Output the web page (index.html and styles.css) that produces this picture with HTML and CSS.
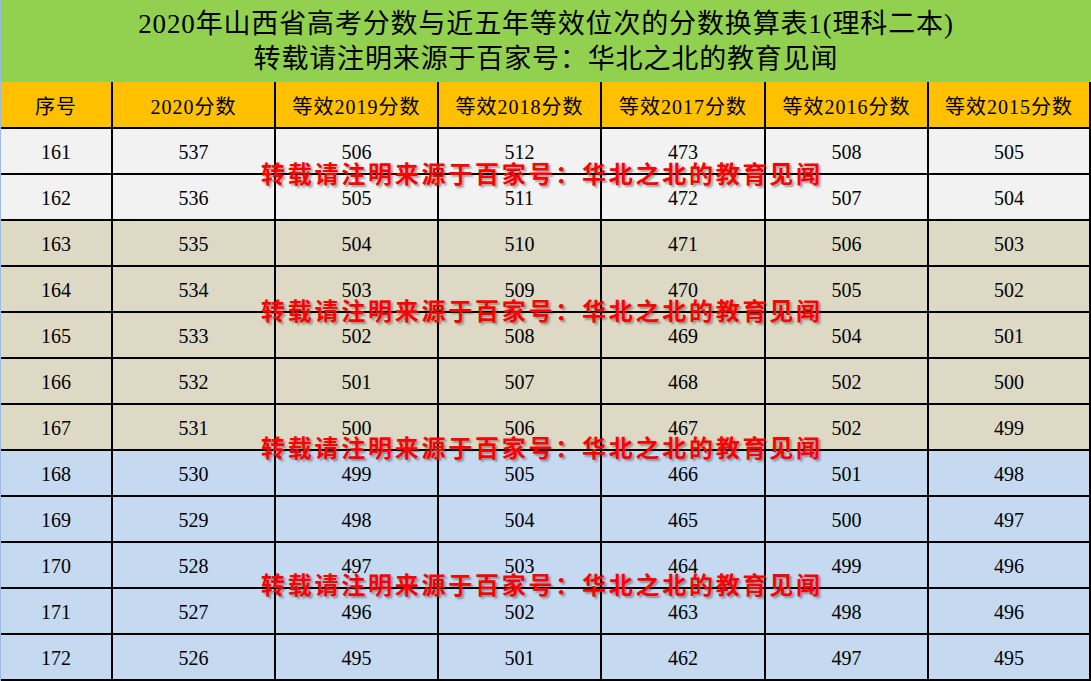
FILE: index.html
```html
<!DOCTYPE html>
<html lang="zh-CN">
<head>
<meta charset="utf-8">
<title>2020年山西省高考分数换算表</title>
<link rel="stylesheet" href="styles.css">
</head>
<body>
<div class="page">
  <div class="title">
    <div class="title-line">2020年山西省高考分数与近五年等效位次的分数换算表1(理科二本)</div>
    <div class="title-line">转载请注明来源于百家号：华北之北的教育见闻</div>
  </div>
  <div class="grid">
    <div class="cell head">序号</div>
    <div class="cell head">2020分数</div>
    <div class="cell head">等效2019分数</div>
    <div class="cell head">等效2018分数</div>
    <div class="cell head">等效2017分数</div>
    <div class="cell head">等效2016分数</div>
    <div class="cell head">等效2015分数</div>

    <div class="cell gray">161</div><div class="cell gray">537</div><div class="cell gray">506</div><div class="cell gray">512</div><div class="cell gray">473</div><div class="cell gray">508</div><div class="cell gray">505</div>
    <div class="cell gray">162</div><div class="cell gray">536</div><div class="cell gray">505</div><div class="cell gray">511</div><div class="cell gray">472</div><div class="cell gray">507</div><div class="cell gray">504</div>
    <div class="cell tan">163</div><div class="cell tan">535</div><div class="cell tan">504</div><div class="cell tan">510</div><div class="cell tan">471</div><div class="cell tan">506</div><div class="cell tan">503</div>
    <div class="cell tan">164</div><div class="cell tan">534</div><div class="cell tan">503</div><div class="cell tan">509</div><div class="cell tan">470</div><div class="cell tan">505</div><div class="cell tan">502</div>
    <div class="cell tan">165</div><div class="cell tan">533</div><div class="cell tan">502</div><div class="cell tan">508</div><div class="cell tan">469</div><div class="cell tan">504</div><div class="cell tan">501</div>
    <div class="cell tan">166</div><div class="cell tan">532</div><div class="cell tan">501</div><div class="cell tan">507</div><div class="cell tan">468</div><div class="cell tan">502</div><div class="cell tan">500</div>
    <div class="cell tan">167</div><div class="cell tan">531</div><div class="cell tan">500</div><div class="cell tan">506</div><div class="cell tan">467</div><div class="cell tan">502</div><div class="cell tan">499</div>
    <div class="cell blue">168</div><div class="cell blue">530</div><div class="cell blue">499</div><div class="cell blue">505</div><div class="cell blue">466</div><div class="cell blue">501</div><div class="cell blue">498</div>
    <div class="cell blue">169</div><div class="cell blue">529</div><div class="cell blue">498</div><div class="cell blue">504</div><div class="cell blue">465</div><div class="cell blue">500</div><div class="cell blue">497</div>
    <div class="cell blue">170</div><div class="cell blue">528</div><div class="cell blue">497</div><div class="cell blue">503</div><div class="cell blue">464</div><div class="cell blue">499</div><div class="cell blue">496</div>
    <div class="cell blue">171</div><div class="cell blue">527</div><div class="cell blue">496</div><div class="cell blue">502</div><div class="cell blue">463</div><div class="cell blue">498</div><div class="cell blue">496</div>
    <div class="cell blue">172</div><div class="cell blue">526</div><div class="cell blue">495</div><div class="cell blue">501</div><div class="cell blue">462</div><div class="cell blue">497</div><div class="cell blue">495</div>
  </div>
  <div class="mark mark1">转载请注明来源于百家号：华北之北的教育见闻</div>
  <div class="mark mark2">转载请注明来源于百家号：华北之北的教育见闻</div>
  <div class="mark mark3">转载请注明来源于百家号：华北之北的教育见闻</div>
  <div class="mark mark4">转载请注明来源于百家号：华北之北的教育见闻</div>
</div>
</body>
</html>
```
FILE: styles.css
```css
html, body {
  margin: 0;
  padding: 0;
}
body {
  background: #9dbbe1;
  width: 1091px;
  height: 681px;
  overflow: hidden;
  font-family: "Liberation Serif", "Noto Sans CJK SC", serif;
  color: #000;
}
.page {
  position: relative;
  margin-left: 1px;
  width: 1090px;
}
.title {
  height: 82px;
  box-sizing: border-box;
  padding-top: 7px;
  background: #92d050;
  text-align: center;
}
.title-line {
  font-size: 27px;
  line-height: 35px;
  letter-spacing: 0.85px;
  white-space: nowrap;
}
.grid {
  display: grid;
  grid-template-columns: 110px 161px 161px 161px 162px 161px 160px;
  grid-template-rows: 45px repeat(12, 44px);
  column-gap: 2px;
  row-gap: 2px;
  padding-right: 2px;
  padding-bottom: 2px;
  background: #000;
}
.cell {
  display: flex;
  align-items: center;
  justify-content: center;
  font-size: 20px;
  padding-top: 3px;
  box-sizing: border-box;
}
.head {
  background: #ffc000;
  letter-spacing: 1px;
  padding-top: 2px;
}
.gray { background: #f2f2f2; }
.tan { background: #ddd9c4; }
.blue { background: #c5d9f1; }
.mark {
  position: absolute;
  left: 260px;
  font-family: "Noto Sans CJK SC", sans-serif;
  font-weight: 700;
  font-size: 24px;
  line-height: 30px;
  letter-spacing: 2.75px;
  color: #ff0000;
  white-space: nowrap;
  text-shadow: 2px 2px 2px rgba(60, 60, 60, 0.45);
}
.mark1 { top: 158px; }
.mark2 { top: 295px; }
.mark3 { top: 432px; }
.mark4 { top: 569px; }
```
